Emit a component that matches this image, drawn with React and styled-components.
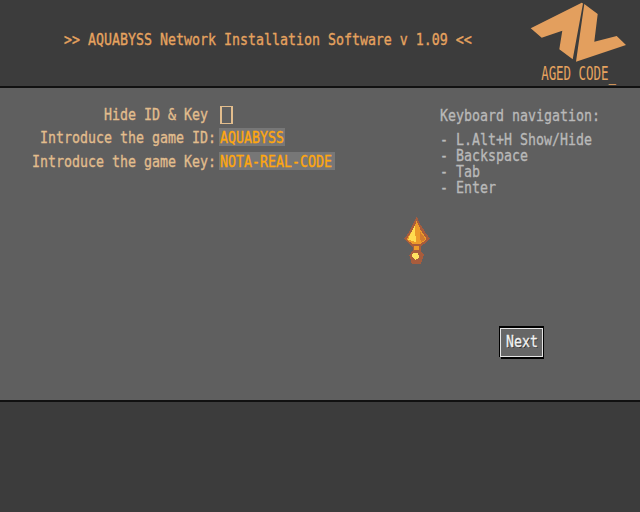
import React from "react";
import styled, { createGlobalStyle } from "styled-components";

const Global = createGlobalStyle`
  html, body { margin: 0; padding: 0; background: #3c3c3c; }
  body { font-family: "DejaVu Sans Mono", monospace; }
`

const Screen = styled.div`
  position: relative;
  width: 640px;
  height: 512px;
  overflow: hidden;
  display: flex;
  flex-direction: column;
  background: #3c3c3c;
`
const Header = styled.header`
  height: 86px;
  display: flex;
  justify-content: space-between;
  border-bottom: 2px solid #111;
  padding-left: 64px;
  color: #e6a35f;
`
const Title = styled.div`
  padding-top: 30px;
`
const Brand = styled.div`
  width: 110px;
  display: flex;
  flex-direction: column;
`
const Main = styled.main`
  height: 312px;
  background: #5f5f5f;
  display: flex;
  flex-direction: column;
`
const Upper = styled.div`
  display: flex;
  padding-top: 18px;
`
const Form = styled.div`
  width: 440px;
  display: flex;
  flex-direction: column;
`
const Row = styled.div`
  display: flex;
  align-items: flex-start;
  height: ${p => p.$h}px;
`
const Label = styled.div`
  width: 216px;
  height: 18px;
  display: flex;
  align-items: center;
  justify-content: flex-end;
  padding-right: ${p => p.$pad || 0}px;
  padding-top: ${p => p.$top || 0}px;
  box-sizing: border-box;
  color: #e2bd8d;
  margin-right: 3px;
`
const Checkbox = styled.div`
  width: 13px;
  height: 18px;
  margin-left: 1px;
  box-sizing: border-box;
  border: 2px solid #e2bd8d;
  border-width: 1px 2px;
`
const Field = styled.div`
  width: ${p => p.$w}px;
  height: 18px;
  padding: 1px 0 0 1px;
  box-sizing: border-box;
  display: flex;
  align-items: center;
  background: #777;
  color: #ffa70f;
`
const Help = styled.div`
  color: #b9b9b9;
  display: flex;
  flex-direction: column;
  padding-top: 2px;
`
const HelpList = styled.div`
  display: flex;
  flex-direction: column;
  margin-top: 8px;
`
const Actions = styled.div`
  margin-top: auto;
  display: flex;
  justify-content: flex-end;
  padding: 0 97px 43px 0;
`
const NextButton = styled.button`
  width: 43px;
  height: 29px;
  padding: 0 0 2px;
  display: flex;
  align-items: center;
  justify-content: center;
  background: #666;
  color: #f2f2f2;
  border: 1px solid #e4e4e4;
  box-shadow: 1px 2px 0 0 #000, 0 -1px 0 1px #000;
  text-shadow: 1px 1px 0 #222;
  font-family: inherit;
`
const Bottom = styled.footer`
  flex: 1;
  border-top: 2px solid #111;
`
const Cell = styled.span`
  display: inline-block;
  height: 16px;
  line-height: 16px;
  white-space: pre;
  width: ${p => p.$n * 8}px;
`
const Squeeze = styled.span`
  display: inline-block;
  font-size: 16.5px;
  -webkit-text-stroke: 0.35px currentColor;
  transform-origin: left center;
  transform: scaleX(0.805);
`
const Logo = styled.svg`
  display: block;
`
const Signature = styled.div`
  padding-left: 17px;
  margin-top: 1px;
  color: #e6a35f;
  font-size: 19px;
  line-height: 16px;
  white-space: pre;
  transform-origin: left center;
  transform: scaleX(0.655);
`
const Pointer = styled.svg`
  position: absolute;
  left: 390px;
  top: 205px;
`

const Txt = ({ children }) => (
  <Cell $n={children.length}>
    <Squeeze>{children}</Squeeze>
  </Cell>
)

export default function App() {
  return (
    <Screen>
      <Global />
      <Header>
        <Title>
          <Txt>{">> AQUABYSS Network Installation Software v 1.09 <<"}</Txt>
        </Title>
        <Brand>
          <Logo width="110" height="64" viewBox="530 0 110 64">
            <polygon fill="#e39f5e" points="530.7,28.3 581.7,2.7 583,3.5 572.7,59.3 559.3,49.3 562.3,30.7 541.7,37.7" />
            <polygon fill="#e39f5e" points="584.3,4 597.7,14 594.3,41.7 616.7,36 626,45 576,61.7" />
          </Logo>
          <Signature>AGED CODE_</Signature>
        </Brand>
      </Header>
      <Main>
        <Upper>
          <Form>
            <Row $h={22}>
              <Label $pad={8}><Txt>Hide ID &amp; Key</Txt></Label>
              <Checkbox />
            </Row>
            <Row $h={24}>
              <Label $top={2}><Txt>Introduce the game ID:</Txt></Label>
              <Field $w={66}><Txt>AQUABYSS</Txt></Field>
            </Row>
            <Row $h={24}>
              <Label $top={2}><Txt>Introduce the game Key:</Txt></Label>
              <Field $w={116}><Txt>NOTA-REAL-CODE</Txt></Field>
            </Row>
          </Form>
          <Help>
            <Txt>Keyboard navigation:</Txt>
            <HelpList>
              <Txt>- L.Alt+H Show/Hide</Txt>
              <Txt>- Backspace</Txt>
              <Txt>- Tab</Txt>
              <Txt>- Enter</Txt>
            </HelpList>
          </Help>
        </Upper>
        <Actions>
          <NextButton><Txt>Next</Txt></NextButton>
        </Actions>
      </Main>
      <Bottom />
      <Pointer width="60" height="65" viewBox="0 0 180 195" shapeRendering="crispEdges">
        <polygon fill="#a85c3c" points="80,35 92,60 108,85 120,102 105,115 92,125 92,140 102,150 92,178 66,178 58,150 68,138 68,125 55,115 42,102 55,85 70,55" />
        <polygon fill="#ec9a2a" points="80,48 92,75 110,102 90,118 68,118 50,102 68,75" />
        <polygon fill="#ffdc50" points="74,62 78,112 54,104" />
        <polygon fill="#d27a2e" points="90,80 106,102 92,114" />
        <rect fill="#ec9a2a" x="72" y="122" width="14" height="14" />
        <polygon fill="#ffe060" points="68,144 84,144 88,158 76,164 66,156" />
      </Pointer>
    </Screen>
  )
}
